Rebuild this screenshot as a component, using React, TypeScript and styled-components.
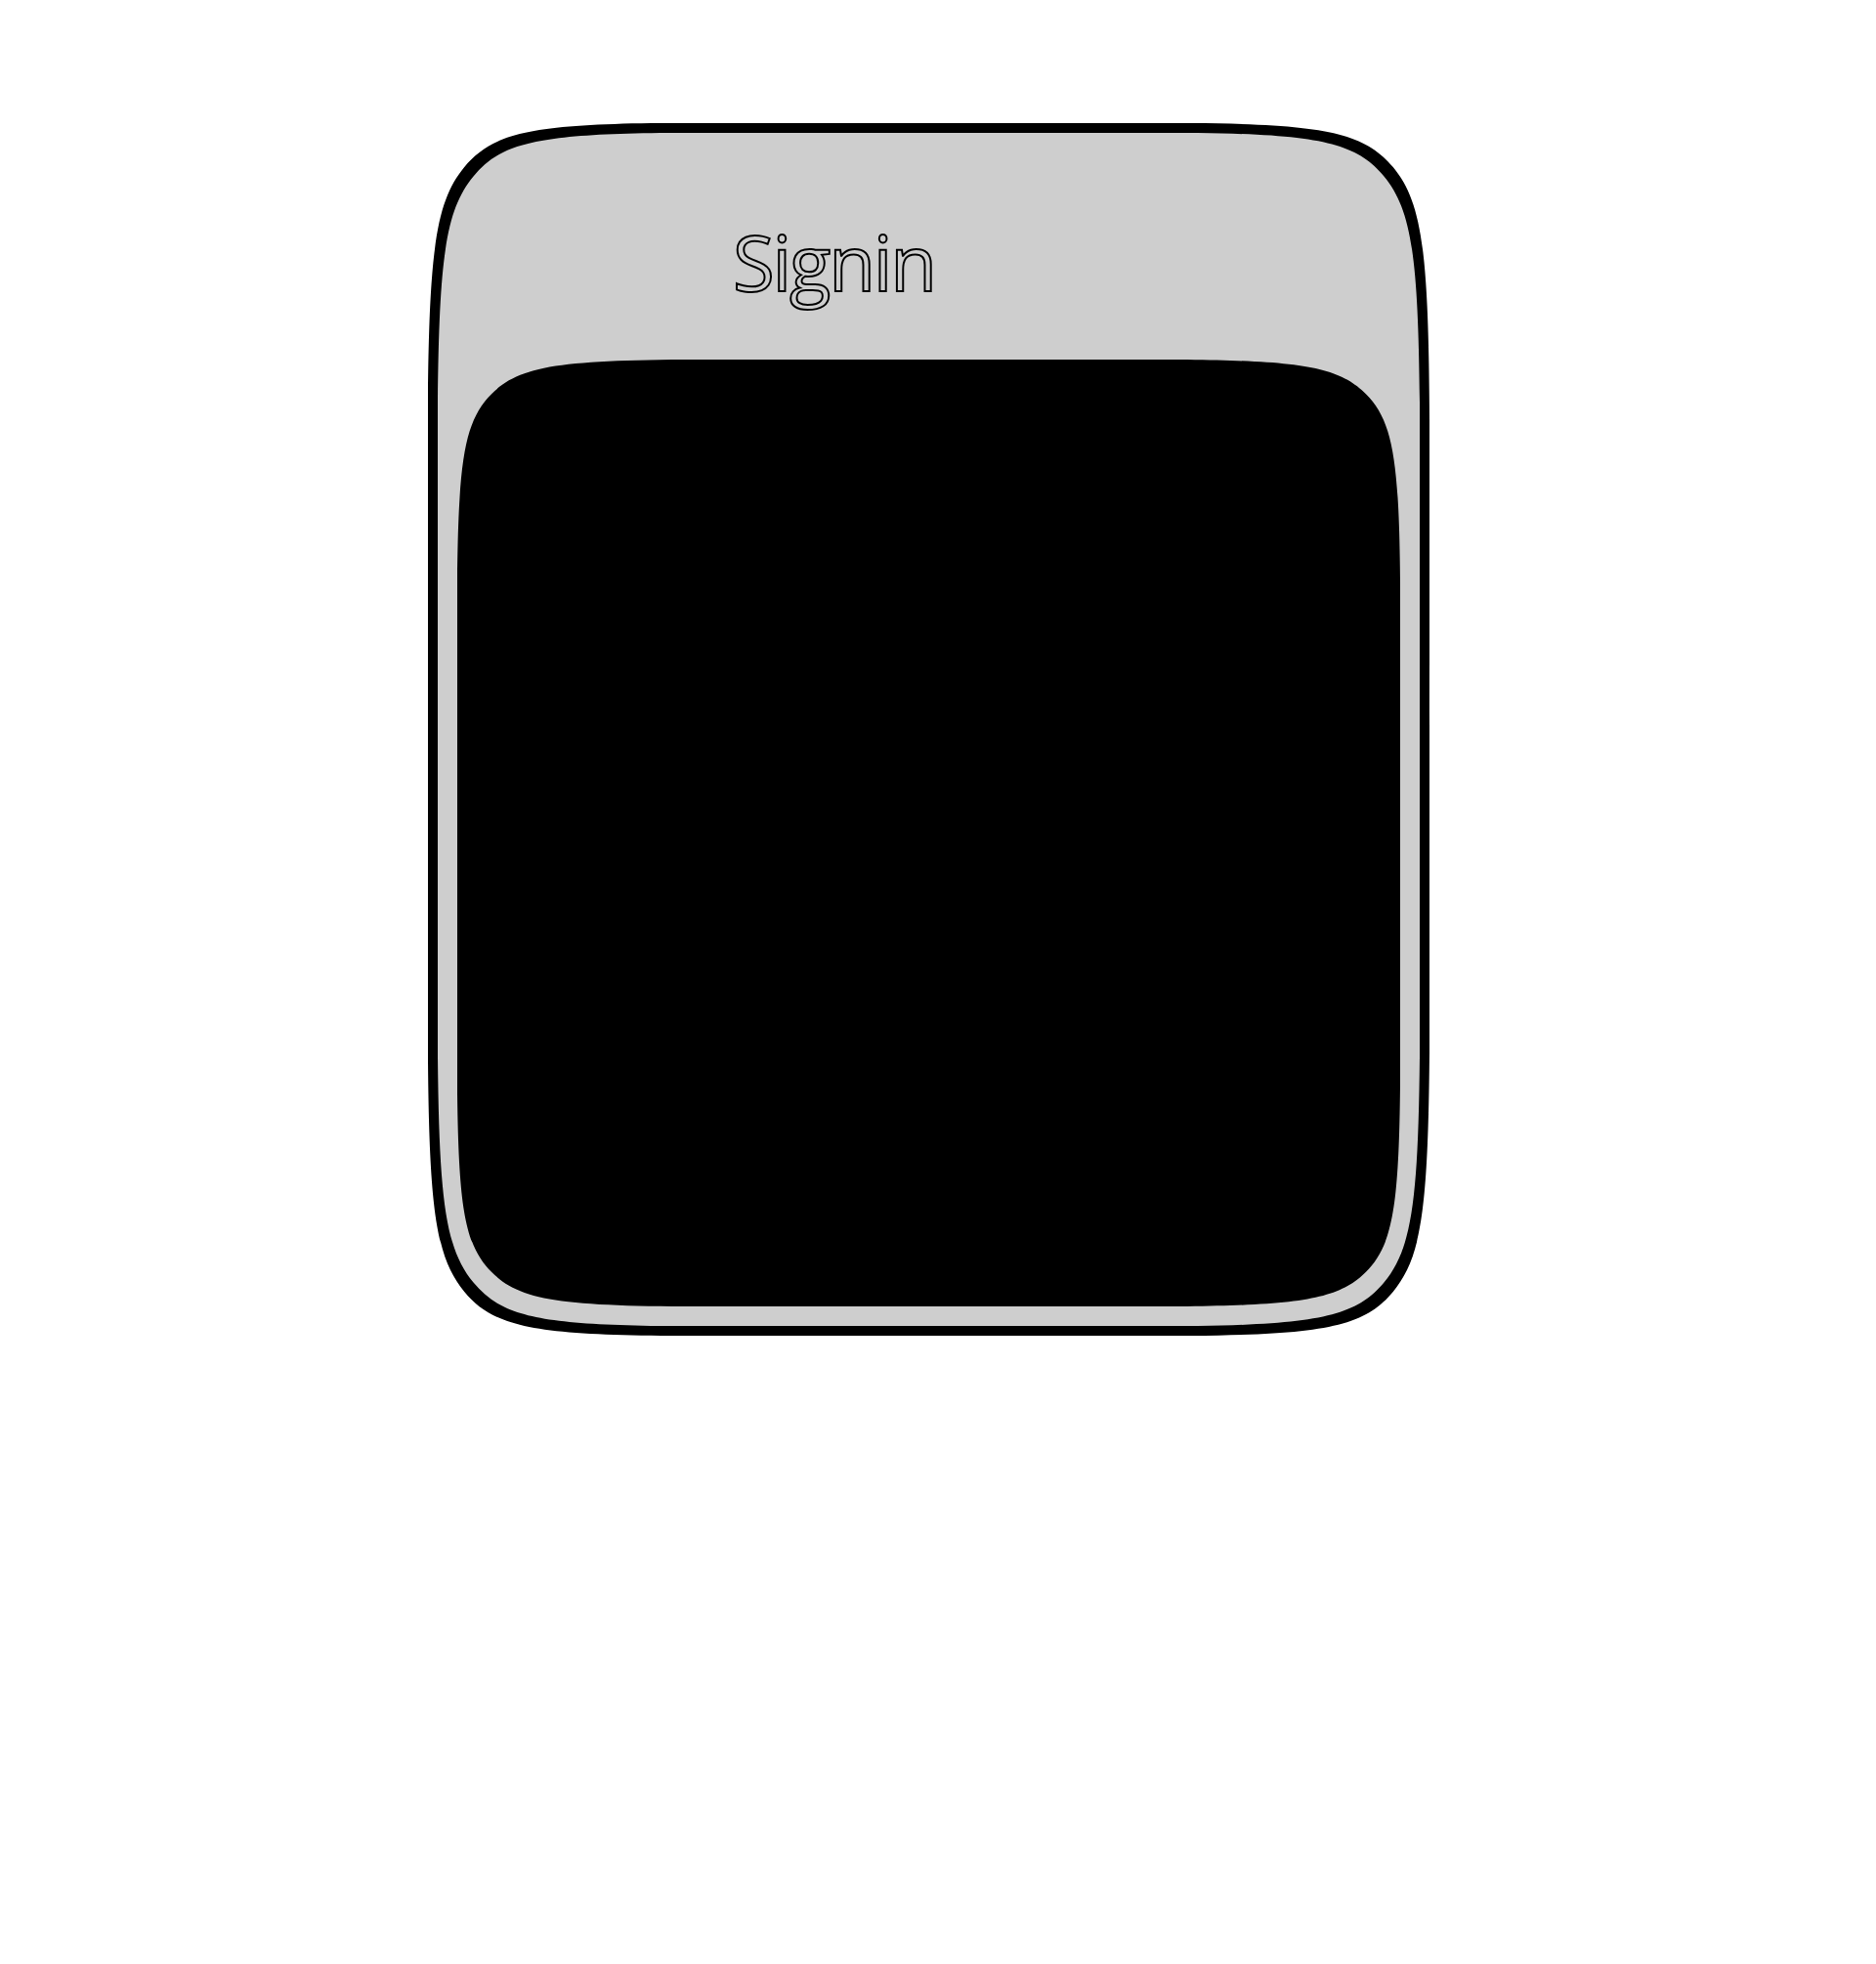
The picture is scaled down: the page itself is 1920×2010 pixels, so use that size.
import React from "react";
import styled, { createGlobalStyle } from "styled-components";

const Global = createGlobalStyle`
  html, body {
    margin: 0;
    padding: 0;
    background: #ffffff;
  }
  body {
    font-family: "Open Sans", "Noto Sans", sans-serif;
  }
`;

const Page = styled.main`
  min-height: 2010px;
  padding: 126px 0 0 438px;
  box-sizing: border-box;
`;

const Card = styled.section`
  width: 1025px;
  height: 1241px;
  box-sizing: border-box;
  background: #cecece;
  border: 10px solid #000;
  border-radius: 50%;
  corner-shape: superellipse(3.2);
  padding: 0 20px 20px 20px;
  display: flex;
  flex-direction: column;
`;

const Header = styled.header`
  height: 232px;
  flex: none;
  display: flex;
  align-items: flex-start;
  padding-left: 282px;
`;

const Title = styled.h1`
  margin: 0;
  margin-top: 93px;
  font-family: "Open Sans", sans-serif;
  font-weight: 400;
  font-size: 78px;
  line-height: 1;
  color: #cecece;
  -webkit-text-stroke: 2px #000;
  letter-spacing: -2.2px;
`;

const Screen = styled.div`
  flex: 1;
  background: #000;
  border-radius: 50%;
  corner-shape: superellipse(3.2);
`;

export default function App() {
  return (
    <>
      <Global />
      <Page>
        <Card>
          <Header>
            <Title>Signin</Title>
          </Header>
          <Screen />
        </Card>
      </Page>
    </>
  );
}
